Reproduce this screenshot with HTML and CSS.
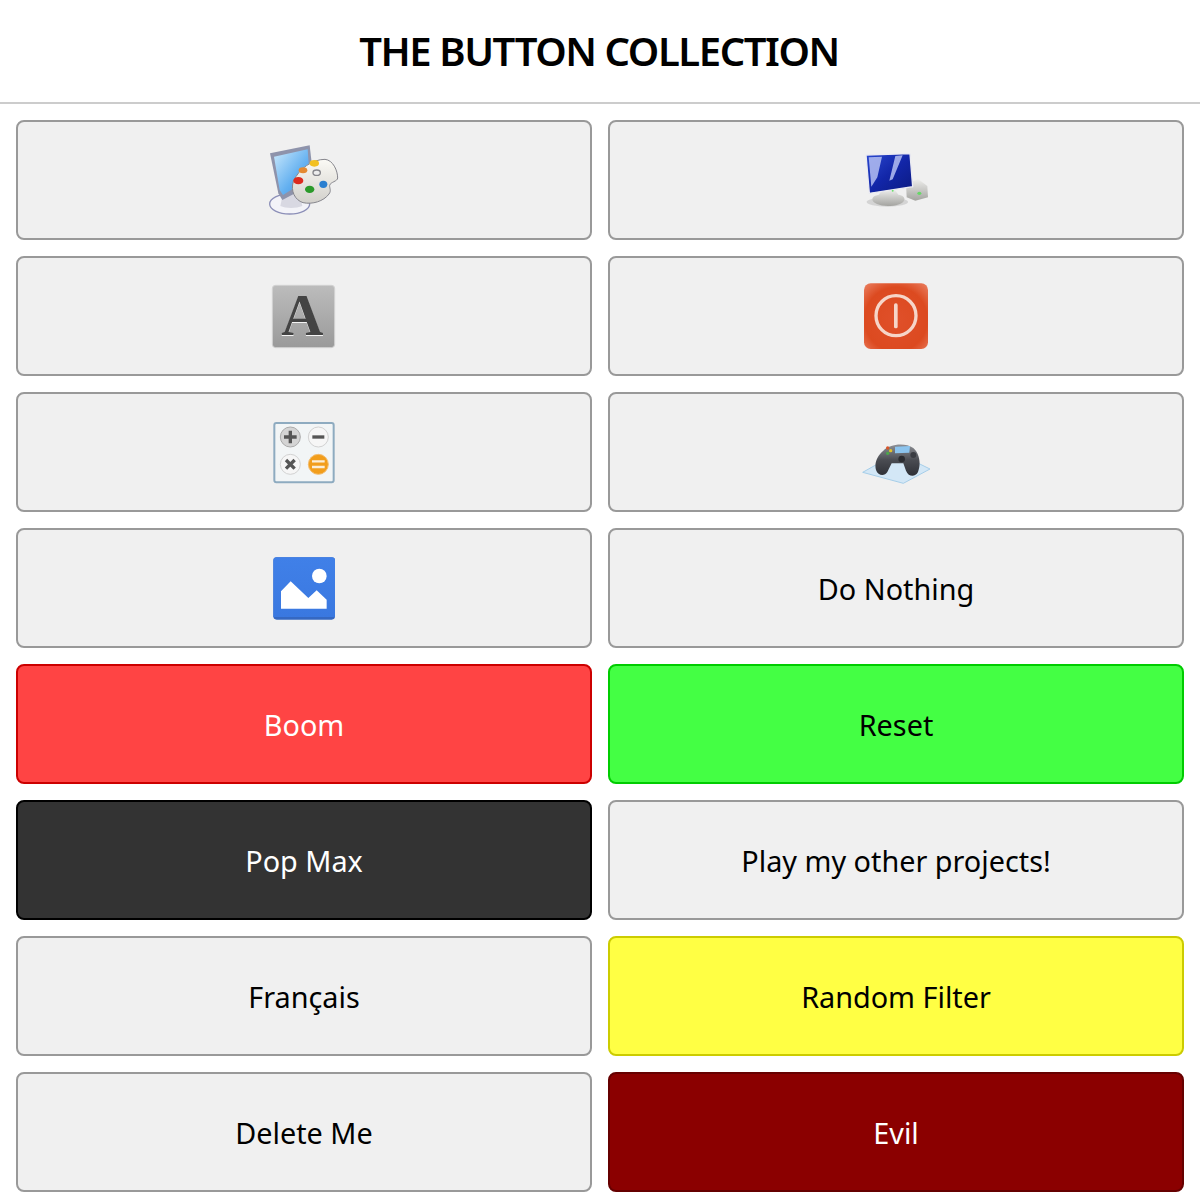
FILE: index.html
```html
<!DOCTYPE html>
<html lang="en">
<head>
<meta charset="utf-8">
<title>The Button Collection</title>
<link rel="stylesheet" href="styles.css">
</head>
<body>
<header class="header"><h1 class="title">THE BUTTON COLLECTION</h1></header>
<main class="grid">
  <button class="btn" aria-label="Appearance">
    <svg class="icon" viewBox="0 0 270 240" width="90" height="80">
      <defs>
        <linearGradient id="scr" x1="0" y1="0" x2="1" y2="1"><stop offset="0" stop-color="#cbe9fc"/><stop offset=".6" stop-color="#63b0f0"/><stop offset="1" stop-color="#3f8fe0"/></linearGradient>
        <linearGradient id="pal" x1="0" y1="0" x2="0" y2="1"><stop offset="0" stop-color="#fbfaf5"/><stop offset="1" stop-color="#d2d0cb"/></linearGradient>
      </defs>
      <ellipse cx="92" cy="192" rx="60" ry="30" fill="#f3f3f8" stroke="#8d90b8" stroke-width="4"/>
      <path d="M72 160h50l8 38c-18 8-50 8-66 0z" fill="#d8d8e2"/>
      <path d="M33 40 152 16 165 130 70 180 58 160z" fill="#8e93ab"/>
      <path d="M45 50 146 28 152 115 72 165 62 150z" fill="url(#scr)"/>
      <path d="M103 124C120 86 160 58 198 58c24 2 38 34 38 56 0 10-22 12-24 22-1 8 6 16-2 26-16 22-50 32-78 26-24-8-38-34-29-64z" fill="url(#pal)" stroke="#85858c" stroke-width="3"/>
      <ellipse cx="132" cy="91" rx="13" ry="9" fill="#e48a32"/>
      <ellipse cx="166" cy="70" rx="14" ry="10" fill="#f2c020"/>
      <ellipse cx="118" cy="122" rx="15" ry="11" fill="#dc2a1e"/>
      <ellipse cx="152" cy="148" rx="14" ry="11" fill="#2a9a2a"/>
      <ellipse cx="193" cy="133" rx="12" ry="11" fill="#2a7fd0"/>
      <ellipse cx="173" cy="98" rx="11" ry="8" fill="#ececec" stroke="#85858a" stroke-width="4"/>
    </svg>
  </button>
  <button class="btn" aria-label="Display">
    <svg class="icon" viewBox="0 0 270 240" width="90" height="80">
      <defs>
        <linearGradient id="blue" x1="0" y1="0" x2="1" y2="1"><stop offset="0" stop-color="#2a48d0"/><stop offset=".5" stop-color="#1226a8"/><stop offset="1" stop-color="#0c1a80"/></linearGradient>
        <linearGradient id="sil" x1="0" y1="0" x2="0" y2="1"><stop offset="0" stop-color="#ececea"/><stop offset="1" stop-color="#a4a4a0"/></linearGradient>
      </defs>
      <g transform="translate(-3 0)">
        <path d="M168 130 205 118 232 138 234 172 196 182 170 172z" fill="url(#sil)"/>
        <ellipse cx="208" cy="160" rx="6" ry="5" fill="#66d866"/>
        <ellipse cx="112" cy="186" rx="62" ry="14" fill="#bdbdbd" opacity=".55"/>
        <path d="M95 150h40l10 14c14 2 20 8 18 16-4 12-26 18-50 18s-46-8-46-20c0-8 8-12 20-14z" fill="url(#sil)"/>
        <path d="M48 45 180 41 188 140 58 160z" fill="url(#blue)" stroke="#ebebf2" stroke-width="4"/>
        <path d="M56 52 96 50 82 112 64 140zM136 48 158 46 128 118 118 122z" fill="#b5c0f2" opacity=".85"/>
        <circle cx="128" cy="152" r="3" fill="#6fe06f"/>
      </g>
    </svg>
  </button>
  <button class="btn" aria-label="Fonts">
    <svg class="icon" viewBox="0 0 270 240" width="90" height="80">
      <defs><linearGradient id="gry" x1="0" y1="0" x2="0" y2="1"><stop offset="0" stop-color="#bcbcbc"/><stop offset="1" stop-color="#9a9a9a"/></linearGradient></defs>
      <rect x="40" y="28" width="187" height="187" rx="10" fill="url(#gry)" stroke="#d2d2d2" stroke-width="3"/>
      <text class="glyph glyph-light" x="130" y="181" text-anchor="middle">A</text>
      <text class="glyph glyph-dark" x="130" y="177" text-anchor="middle">A</text>
    </svg>
  </button>
  <button class="btn" aria-label="Power">
    <svg class="icon" viewBox="0 0 270 240" width="90" height="80">
      <defs><radialGradient id="red" cx=".5" cy=".55" r=".7"><stop offset="0" stop-color="#e0502a"/><stop offset=".7" stop-color="#dc4a20"/><stop offset="1" stop-color="#e87858"/></radialGradient></defs>
      <g transform="translate(-3 0)">
        <rect x="42" y="22" width="192" height="197" rx="20" fill="url(#red)"/>
        <circle cx="138" cy="119" r="60" fill="none" stroke="#f6d5c8" stroke-width="10"/>
        <rect x="132" y="82" width="11" height="75" rx="5" fill="#f6d5c8"/>
      </g>
    </svg>
  </button>
  <button class="btn" aria-label="Calculator">
    <svg class="icon" viewBox="0 0 270 240" width="90" height="80">
      <g transform="translate(3 0)">
        <rect x="43" y="33" width="178" height="178" rx="6" fill="#f2f5f6" stroke="#8eabc0" stroke-width="6"/>
        <circle cx="91" cy="75" r="30" fill="#d4d4d4" stroke="#aaa" stroke-width="3"/>
        <path d="M72 75h38M91 56v38" stroke="#555" stroke-width="10"/>
        <circle cx="175" cy="75" r="30" fill="#f6f6f6" stroke="#d2d2d2" stroke-width="3"/>
        <path d="M157 75h36" stroke="#555" stroke-width="10"/>
        <circle cx="91" cy="157" r="30" fill="#f6f6f6" stroke="#d2d2d2" stroke-width="3"/>
        <path d="M78 144l26 26M104 144l-26 26" stroke="#555" stroke-width="10"/>
        <circle cx="175" cy="157" r="30" fill="#f29e1c" stroke="#f2bd70" stroke-width="3"/>
        <path d="M156 148h38M156 165h38" stroke="#fbeed8" stroke-width="7"/>
      </g>
    </svg>
  </button>
  <button class="btn" aria-label="Game controller">
    <svg class="icon" viewBox="0 0 270 240" width="90" height="80">
      <defs><linearGradient id="pad" x1="0" y1="0" x2="0" y2="1"><stop offset="0" stop-color="#8e9096"/><stop offset=".5" stop-color="#4a4c52"/><stop offset="1" stop-color="#2e3036"/></linearGradient></defs>
      <g transform="translate(-3 24)">
        <path d="M38 157 95 125 195 125 240 147 160 190z" fill="#d3e7f6" stroke="#a5cde8" stroke-width="3"/>
        <path d="M100 92C118 72 165 66 190 84 208 100 214 130 204 156 196 172 176 172 168 152L160 130H125L112 156C104 170 84 168 78 150 72 130 82 106 100 92z" fill="url(#pad)"/>
        <path d="M135 80 180 78 178 98 135 100z" fill="#8cc4ee"/>
        <circle cx="113" cy="84" r="5" fill="#d8562a"/><circle cx="122" cy="92" r="5" fill="#e2c22c"/><circle cx="113" cy="100" r="5" fill="#4aa84a"/>
        <circle cx="155" cy="117" r="10" fill="#2a2c31"/><circle cx="190" cy="105" r="9" fill="#3a3c42"/>
      </g>
    </svg>
  </button>
  <button class="btn" aria-label="Pictures">
    <svg class="icon" viewBox="0 0 270 240" width="90" height="80">
      <defs><linearGradient id="sky" x1="0" y1="0" x2="0" y2="1"><stop offset="0" stop-color="#4080e8"/><stop offset="1" stop-color="#3a78e0"/></linearGradient></defs>
      <g transform="translate(3 0)">
        <rect x="40" y="28" width="185" height="187" rx="10" fill="#3568c2"/>
        <path d="M40 38a10 10 0 0 1 10-10H215a10 10 0 0 1 10 10V207H40z" fill="url(#sky)"/>
        <circle cx="178" cy="84" r="22" fill="#fff"/>
        <path d="M63 182V130L92 100 145 150 170 127 200 155V182z" fill="#fff"/>
      </g>
    </svg>
  </button>
  <button class="btn">Do Nothing</button>
  <button class="btn btn-red">Boom</button>
  <button class="btn btn-green">Reset</button>
  <button class="btn btn-dark">Pop Max</button>
  <button class="btn">Play my other projects!</button>
  <button class="btn">Français</button>
  <button class="btn btn-yellow">Random Filter</button>
  <button class="btn">Delete Me</button>
  <button class="btn btn-evil">Evil</button>
</main>
</body>
</html>
```
FILE: styles.css
```css
* { box-sizing: border-box; }
html, body { margin: 0; padding: 0; background: #fff; }
body { font-family: "Noto Sans", sans-serif; color: #000; }
.header {
  height: 104px;
  padding-right: 2px;
  border-bottom: 2px solid #ccc;
  display: flex;
  align-items: center;
  justify-content: center;
}
.title { margin: 0; font-size: 40px; font-weight: 600; line-height: 1; letter-spacing: -1.43px; }
.grid {
  display: grid;
  grid-template-columns: 1fr 1fr;
  grid-auto-rows: 120px;
  gap: 16px;
  padding: 16px;
}
.btn {
  display: flex;
  align-items: center;
  justify-content: center;
  padding: 0;
  font-family: inherit;
  font-size: 28.8px;
  color: #000;
  background: #f0f0f0;
  border: 2px solid #999;
  border-radius: 8px;
}
.icon { display: block; filter: blur(0.5px); }
.glyph { font-family: "Liberation Serif", serif; font-weight: 700; font-size: 175px; }
.glyph-dark { fill: #444; }
.glyph-light { fill: #f4f4f4; }
.btn-red { background: #ff4444; border-color: #cc0000; color: #fff; }
.btn-green { background: #44ff44; border-color: #00cc00; }
.btn-dark { background: #333; border-color: #000; color: #fff; }
.btn-yellow { background: #ffff44; border-color: #cccc00; }
.btn-evil { background: #8b0000; border-color: #660000; color: #fff; }
```
